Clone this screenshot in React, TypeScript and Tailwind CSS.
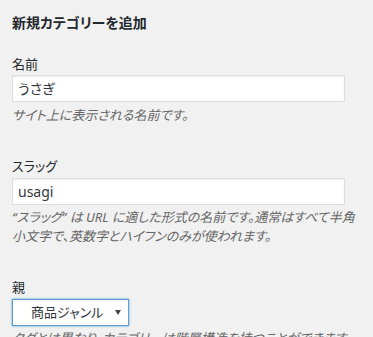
export default function App() {
  return (
    <div className="min-h-screen bg-[#f1f1f1] pt-[13px] pl-3 text-[#23282d] [font-family:'Noto_Sans','Noto_Sans_CJK_JP',sans-serif] [font-feature-settings:'palt']">
      <div className="w-[350px]">
        <h2 className="text-[14px] leading-[20px] font-bold">新規カテゴリーを追加</h2>

        <div className="mt-[22px]">
          <label className="block text-[13px] leading-[18px]">名前</label>
          <div className="mt-[2px] h-[27px] w-[95%] border border-[#ddd] bg-white px-[5px] text-[14px] leading-[25px] text-[#32373c] shadow-[inset_0_1px_2px_rgba(0,0,0,0.07)]">
            うさぎ
          </div>
          <p className="mt-[4px] text-[13px] leading-[19px] italic text-[#666]">サイト上に表示される名前です。</p>
        </div>

        <div className="mt-[32px]">
          <label className="block text-[13px] leading-[18px]">スラッグ</label>
          <div className="mt-[3px] h-[27px] w-[95%] border border-[#ddd] bg-white px-[5px] text-[14px] leading-[25px] text-[#32373c] shadow-[inset_0_1px_2px_rgba(0,0,0,0.07)]">
            usagi
          </div>
          <p className="mt-[3px] text-[13px] leading-[19px] italic text-[#666]">
            “スラッグ” は URL に適した形式の名前です。通常はすべて半角小文字で、英数字とハイフンのみが使われます。
          </p>
        </div>

        <div className="mt-[32px]">
          <label className="block text-[13px] leading-[18px]">親</label>
          <div className="mt-[3px] flex h-[27px] w-[117px] items-center border border-[#5b9dd9] bg-white pl-[18px] pr-[7px] text-[13px] text-[#32373c] shadow-[0_0_2px_rgba(30,140,190,0.8)]">
            <span className="flex-1">商品ジャンル</span>
            <svg width="6" height="5" viewBox="0 0 6 5">
              <path d="M0 0h6L3 5z" fill="#444" />
            </svg>
          </div>
          <p className="mt-[3px] text-[13px] leading-[19px] italic text-[#666]">
            タグとは異なり、カテゴリーは階層構造を持つことができます。たとえば、ジャズというカテゴリーの下にビバップやビッグバンドという子カテゴリーを作る、といったようなことです。これはオプションです。
          </p>
        </div>
      </div>
    </div>
  );
}
